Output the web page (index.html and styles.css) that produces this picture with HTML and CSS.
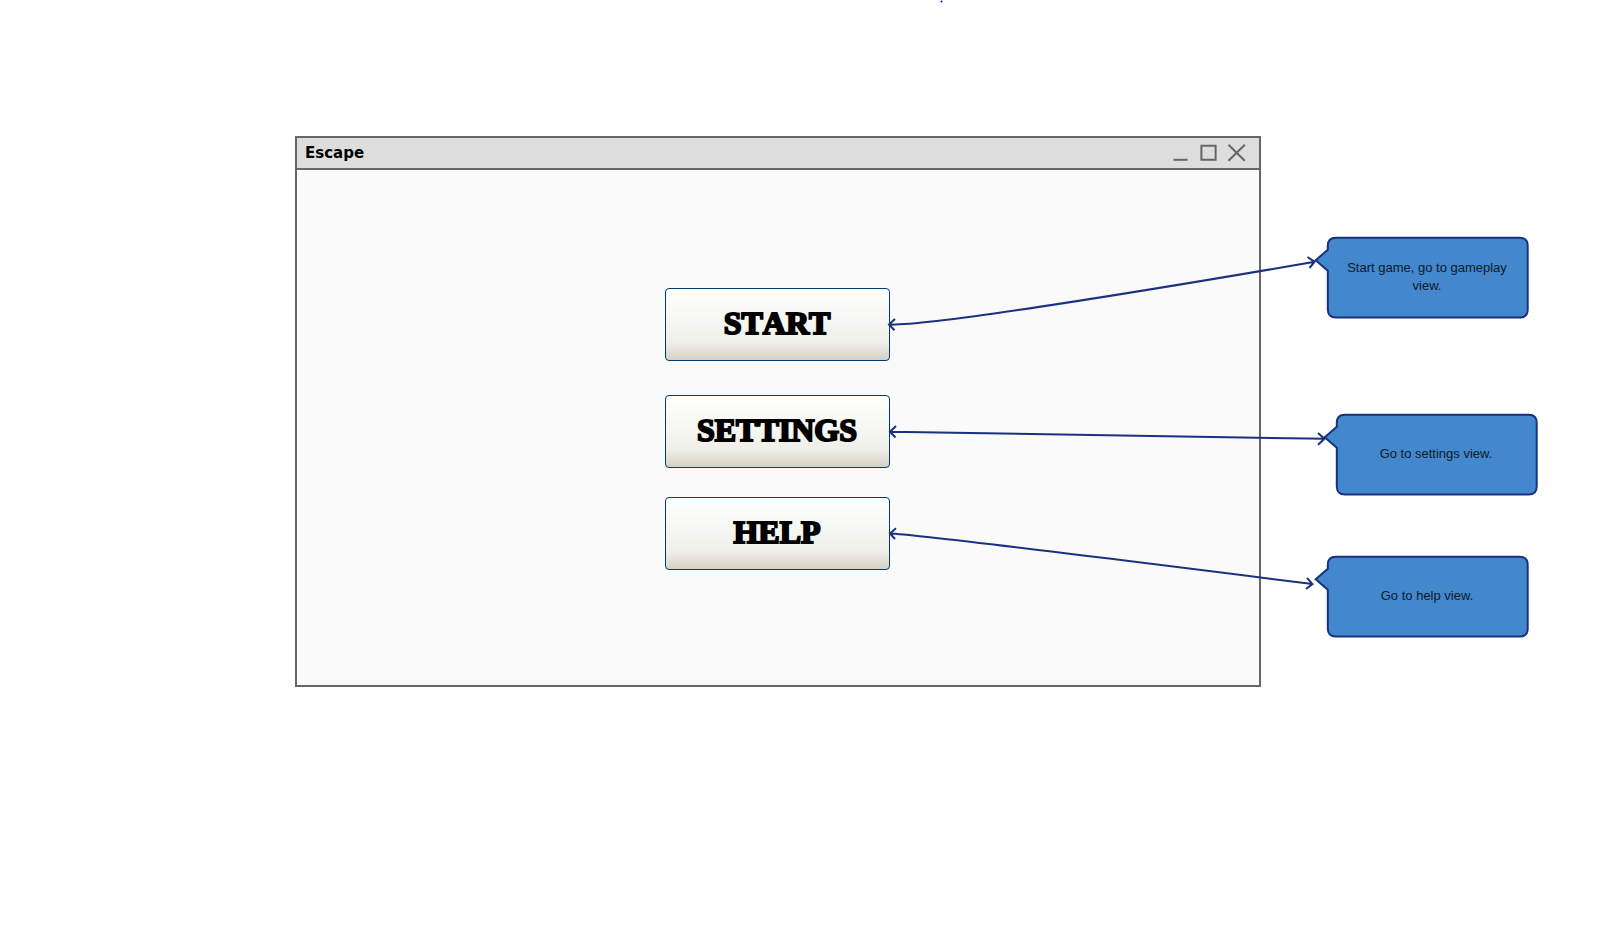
FILE: index.html
```html
<!DOCTYPE html>
<html lang="en">
<head>
<meta charset="utf-8">
<title>Escape</title>
<link rel="stylesheet" href="styles.css">
</head>
<body>
<svg class="defs" aria-hidden="true">
  <symbol id="callout" viewBox="0 0 216 84">
    <path d="M22.8 2.8H206.7Q214.7 2.8 214.7 10.8V74.5Q214.7 82.5 206.7 82.5H22.8Q14.8 82.5 14.8 74.5V35.7L2.7 25.3L14.8 14.7V10.8Q14.8 2.8 22.8 2.8Z"/>
  </symbol>
</svg>
<main class="canvas">
  <section class="window" aria-labelledby="window-title">
    <header class="titlebar">
      <h1 class="title" id="window-title">Escape</h1>
      <div class="controls">
        <button class="control" type="button" aria-label="Minimize"><svg viewBox="0 0 28 30"><path d="M6.5 21.8H20.6"/></svg></button>
        <button class="control" type="button" aria-label="Maximize"><svg viewBox="0 0 28 30"><path d="M6.4 7.8H20.6V21.8H6.4Z"/></svg></button>
        <button class="control" type="button" aria-label="Close"><svg viewBox="0 0 28 30"><path d="M5.5 6.8L21.8 22.8M21.8 6.8L5.5 22.8"/></svg></button>
      </div>
    </header>
    <nav class="menu">
      <button class="menu-button menu-primary" type="button">START</button>
      <button class="menu-button" type="button">SETTINGS</button>
      <button class="menu-button" type="button">HELP</button>
    </nav>
  </section>

  <aside class="note note-start"><svg class="note-shape"><use href="#callout"/></svg><p class="note-text">Start game, go to gameplay view.</p></aside>
  <aside class="note note-settings"><svg class="note-shape"><use href="#callout"/></svg><p class="note-text">Go to settings view.</p></aside>
  <aside class="note note-help"><svg class="note-shape"><use href="#callout"/></svg><p class="note-text">Go to help view.</p></aside>

  <svg class="connectors" aria-hidden="true">
    <path d="M889 324.6Q940 326 1315 261.8M895 319L889 324.6L894.5 330.3M1307.5 257L1314.6 261.8L1309.5 268"/>
    <path d="M890 431.7Q920 432.5 1325 438.8M896 426L890 431.7L895.5 437.5M1318 433L1324.5 438.8L1318 444.8"/>
    <path d="M890 533.5Q920 534.5 1312.5 584M896 528.3L890 533.5L895 539M1307 577.8L1312.5 584L1306 589"/>
    <circle class="dot" cx="941.5" cy="1.5" r="1"/>
  </svg>
</main>
</body>
</html>
```
FILE: styles.css
```css
* {
  box-sizing: border-box;
}

body {
  margin: 0;
  background: #fff;
  color: #000;
  font-family: "Liberation Sans", Arial, sans-serif;
}

.defs {
  position: absolute;
  width: 0;
  height: 0;
}

.canvas {
  position: relative;
  min-height: 100vh;
  overflow: hidden;
}

.window {
  position: absolute;
  left: 295px;
  top: 136px;
  width: 966px;
  height: 551px;
  display: flex;
  flex-direction: column;
  border: 2px solid #666;
  background: #fafafa;
}

.titlebar {
  display: flex;
  align-items: center;
  justify-content: space-between;
  padding: 0 8px;
  border-bottom: 2px solid #666;
  background: #ddd;
}

.title {
  margin: 0;
  font: 700 15px/30px "DejaVu Sans", Verdana, sans-serif;
}

.controls {
  display: flex;
}

.control {
  width: 28px;
  height: 30px;
  padding: 0;
  border: 0;
  background: none;
}

.control svg {
  display: block;
  fill: none;
  stroke: #666;
  stroke-width: 2;
}

.menu {
  flex: 1;
  display: flex;
  flex-direction: column;
  align-items: center;
  gap: 29px;
  padding: 118px 2px 0 0;
}

.menu-button {
  width: 225px;
  height: 73px;
  padding: 0 0 4px;
  border: 1px solid #003c74;
  border-radius: 4px;
  background: linear-gradient(#fff 0%, #f0f0ea 74%, #ece9e2 80%, #d6d0c5 100%);
  color: #000;
  font: 700 32px/36px Stencil, "Liberation Serif", serif;
  font-kerning: none;
  -webkit-text-stroke: 2px #000;
}

.menu-primary {
  margin-bottom: 5px;
}

.note {
  position: absolute;
  width: 216px;
  height: 84px;
  display: flex;
  align-items: center;
  justify-content: center;
  padding: 0 16px 0 28px;
}

.note-start {
  left: 1313px;
  top: 235px;
}

.note-settings {
  left: 1322px;
  top: 412px;
}

.note-help {
  left: 1313px;
  top: 554px;
}

.note-shape {
  position: absolute;
  inset: 0;
  width: 100%;
  height: 100%;
  fill: #4387cc;
  stroke: #1a3080;
  stroke-width: 2;
}

.note-text {
  position: relative;
  margin: 0;
  color: #0d1b29;
  font-size: 13px;
  line-height: 18px;
  text-align: center;
}

.connectors {
  position: absolute;
  inset: 0;
  width: 100%;
  height: 100%;
  pointer-events: none;
  fill: none;
  stroke: #1a3080;
  stroke-width: 2;
}

.dot {
  fill: #00c;
  stroke: none;
}
```
